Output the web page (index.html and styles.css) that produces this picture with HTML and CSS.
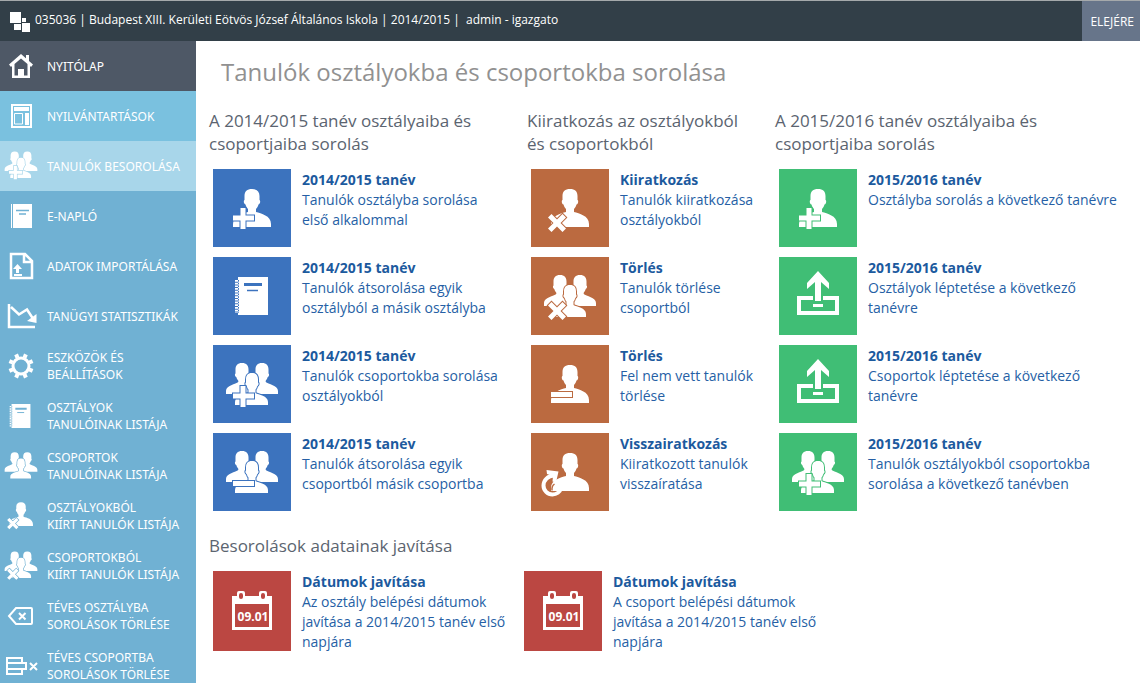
FILE: index.html
```html
<!DOCTYPE html>
<html lang="hu">
<head>
<meta charset="utf-8">
<title>Tanulók osztályokba és csoportokba sorolása</title>
<link rel="stylesheet" href="styles.css">
</head>
<body>
<svg class="defs" aria-hidden="true">
  <symbol id="bust" viewBox="0 0 78 78">
    <path d="M39 20c5 0 7.500 2.500 7.500 7v4c1.200.5.8 4-1 4.500-.5 2-1.300 3-2.500 4.500v3c5 1.500 15 3.500 15 12v3H20v-3c0-8.500 10-10.500 15-12v-3c-1.200-1.500-2-2.500-2.500-4.500-1.800-.5-2.200-4-1-4.500v-4c0-4.500 2.500-7 7.500-7z"/>
  </symbol>
  <symbol id="trio" viewBox="0 0 78 78">
    <path d="M29 18c4.500 0 6.500 2.500 6.500 6.500v4c1 .5.700 3-.8 3.500-.4 1.500-1 2.500-2 3.700V40l4 2v7H13v-3c0-6 10-6.500 12.300-9v-1.300c-1-1.200-1.600-2.200-2-3.700-1.500-.5-1.800-3-.8-3.500v-4c0-4 2-6.500 6.500-6.500zM49 18c-4.500 0-6.500 2.500-6.500 6.500v4c-1 .5-.7 3 .8 3.500.4 1.500 1 2.500 2 3.700V40l-4 2v7H65v-3c0-6-10-6.500-12.300-9v-1.300c1-1.200 1.600-2.200 2-3.700 1.500-.5 1.800-3 .8-3.500v-4c0-4-2-6.500-6.500-6.500z"/>
    <path class="edged" d="M39 28c4.500 0 6 2.500 6 6.500v3c1 .5.700 3-.8 3.500-.4 1.500-.7 2.500-1.700 3.500V48c3 2 12.500 2.500 12.500 9v3H22v-3c0-6.500 10.500-7 13.500-9v-3.500c-1-1-1.300-2-1.700-3.500-1.500-.5-1.800-3-.8-3.500v-3c0-4 1.500-6.500 6-6.500z"/>
  </symbol>
  <symbol id="plus" viewBox="0 0 78 78"><path class="edged" d="M27.500 39h5v7.500H41v5h-8.500V60h-5v-8.500H20v-5h7.500z"/></symbol>
  <symbol id="cross" viewBox="0 0 78 78"><path class="edged" d="M20.500 45l5.500 5.500 5.500-5.500 3.500 3.500-5.500 5.500 5.500 5.500-3.500 3.500-5.500-5.500-5.500 5.500-3.500-3.500 5.500-5.500-5.500-5.500z"/></symbol>
  <symbol id="student-add" viewBox="0 0 78 78"><use href="#bust"/><use href="#plus"/></symbol>
  <symbol id="student-remove" viewBox="0 0 78 78"><use href="#bust"/><use href="#cross"/></symbol>
  <symbol id="student-bar" viewBox="0 0 78 78"><use href="#bust"/><path class="edged" d="M20 47h21v5H20z"/></symbol>
  <symbol id="student-back" viewBox="0 0 78 78"><use href="#bust"/>
    <path class="line" d="M23 42.500c-6 0-10.500 5-10.500 10s4 9 9 9c4 0 7.500-2.500 8.500-6.500" stroke-width="4"/>
    <path d="M15.500 37l12 1.500-2.500 11-3.500-1 .5-5.500-6-2z"/>
    <path class="cut" d="M23.500 51q-3 2-2.500 6.500" stroke-width="1.500"/></symbol>
  <symbol id="group-add" viewBox="0 0 78 78"><use href="#trio"/><use href="#plus" y="2"/></symbol>
  <symbol id="group-remove" viewBox="0 0 78 78"><use href="#trio"/><use href="#cross"/></symbol>
  <symbol id="group-bar" viewBox="0 0 78 78"><use href="#trio"/><path class="edged" d="M20 48h21v5H20z"/></symbol>
  <symbol id="book" viewBox="0 0 78 78">
    <path d="M25 20h30v38H25z"/>
    <path class="line" d="M23.500 23v33" stroke-width="3" stroke-dasharray="1.700 1"/>
    <path class="cut" d="M25.500 23v33" stroke-width="1" stroke-dasharray="1.700 1"/>
    <path class="cut" d="M31 27.500h18" stroke-width="3"/><path class="cut" d="M34 33.500h11" stroke-width="1.500"/>
  </symbol>
  <symbol id="upload" viewBox="0 0 78 78">
    <path d="M39 14l11 12v6l-8-7v19h-6V25l-8 7v-6z"/>
    <path d="M18 39h16v4H22v11h34V43H44v-4h16v19H18zM34 47h10v3H34z"/>
  </symbol>
  <symbol id="calendar" viewBox="0 0 78 80">
    <path fill-rule="evenodd" d="M19 25h5v-3q0-2 2-2h4q2 0 2 2v3h14v-3q0-2 2-2h4q2 0 2 2v3h5v34H19zM22 33v23h34V33zM28 22q-2 0-2 2v2q0 2 2 2t2-2v-2q0-2-2-2zM50 22q-2 0-2 2v2q0 2 2 2t2-2v-2q0-2-2-2z"/>
  </symbol>
</svg>

<header class="topbar">
  <svg class="logo" viewBox="0 0 22 22"><path d="M1 1h11v11H1zM13 7h4v4h-4zM5 13h7v6H5zM13 12h8v9h-8z"/></svg>
  <p class="school">035036 | Budapest XIII. Kerületi Eötvös József Általános Iskola | 2014/2015 |&nbsp; admin - igazgato</p>
  <button class="to-top" type="button">ELEJÉRE</button>
</header>

<div class="layout">
  <nav class="sidebar">
    <a class="item home" href="#"><svg class="icon" viewBox="0 0 34 34"><path d="M17 5l12 10.500-2 2.500-1-1v12H8V17l-1 1-2-2.500zM10.500 15v11.500H14V20h6v6.500h3.500V15L17 9.500z" fill-rule="evenodd"/><path d="M22 6h3v7l-3-3z"/></svg><span>NYITÓLAP</span></a>
    <a class="item records" href="#"><svg class="icon" viewBox="0 0 34 34"><path fill-rule="evenodd" d="M7 5h21v24H7zM9 7v20h17V7z"/><path d="M10 8h15v4H10zM21 14h4v12h-4z"/><path d="M10.500 14.500h8v10.500h-8z" fill="#7ac1df" stroke="#fff"/></svg><span>NYILVÁNTARTÁSOK</span></a>
    <a class="item current" href="#" aria-current="page"><svg class="icon" viewBox="12 14 54 54"><use href="#group-add" width="78" height="78"/></svg><span>TANULÓK BESOROLÁSA</span></a>
    <a class="item" href="#"><svg class="icon" viewBox="0 0 34 34"><path d="M7 5h1v24H7zM9 5h19v24H9z"/><path class="cut" d="M12 11.500h13M15 15h7" stroke-width="1.500"/></svg><span>E-NAPLÓ</span></a>
    <a class="item" href="#"><svg class="icon" viewBox="0 0 34 34"><path class="line" d="M7 5h14l7 7v17H7zM20 5v8h8" stroke-width="2.500"/><path d="M13.500 15l4.500 5h-3v4h-3v-4H9zM10 25h8v2h-8z"/></svg><span>ADATOK IMPORTÁLÁSA</span></a>
    <a class="item" href="#"><svg class="icon" viewBox="0 0 34 34"><path class="line" d="M5 5v23h26M7 8l8 7.500 8-5 7.500 11.500" stroke-width="2.500"/><path d="M32.500 15v9l-9.500-2z"/></svg><span>TANÜGYI STATISZTIKÁK</span></a>
    <a class="item" href="#"><svg class="icon" viewBox="0 0 34 34"><circle class="line" cx="17" cy="17" r="8" stroke-width="3"/><g class="line" stroke-width="4"><path d="M25.300 20.500l3.300 1.400M20.500 25.300l1.400 3.300M13.500 25.300l-1.400 3.300M8.700 20.500l-3.300 1.400M8.700 13.500l-3.300-1.400M13.500 8.700l-1.400-3.300M20.500 8.700l1.400-3.300M25.300 13.500l3.300-1.400"/></g></svg><span>ESZKÖZÖK ÉS<br>BEÁLLÍTÁSOK</span></a>
    <a class="item" href="#"><svg class="icon" viewBox="13 12 54 54"><use href="#book" width="78" height="78"/></svg><span>OSZTÁLYOK<br>TANULÓINAK LISTÁJA</span></a>
    <a class="item" href="#"><svg class="icon" viewBox="12 13 54 54"><use href="#trio" width="78" height="78"/></svg><span>CSOPORTOK<br>TANULÓINAK LISTÁJA</span></a>
    <a class="item" href="#"><svg class="icon" viewBox="12 15 54 54"><use href="#student-remove" width="78" height="78"/></svg><span>OSZTÁLYOKBÓL<br>KIÍRT TANULÓK LISTÁJA</span></a>
    <a class="item" href="#"><svg class="icon" viewBox="12 14 54 54"><use href="#group-remove" width="78" height="78"/></svg><span>CSOPORTOKBÓL<br>KIÍRT TANULÓK LISTÁJA</span></a>
    <a class="item" href="#"><svg class="icon" viewBox="0 0 34 34"><path class="line" d="M12 9h15q1 0 1 1v14q0 1-1 1H12l-7-8zM15 14l6.500 6.500M21.500 14L15 20.500" stroke-width="2"/></svg><span>TÉVES OSZTÁLYBA<br>SOROLÁSOK TÖRLÉSE</span></a>
    <a class="item" href="#"><svg class="icon" viewBox="0 0 34 34"><path class="line" d="M3 9h15v5H3zM3 14h19v6H3zM3 20h15v5H3zM26 14l7 7M33 14l-7 7" stroke-width="2"/></svg><span>TÉVES CSOPORTBA<br>SOROLÁSOK TÖRLÉSE</span></a>
  </nav>

  <main class="content">
    <h1>Tanulók osztályokba és csoportokba sorolása</h1>
    <div class="columns">
      <section class="blue">
        <h2>A 2014/2015 tanév osztályaiba és<br>csoportjaiba sorolás</h2>
        <a class="card" href="#"><svg class="tile"><use href="#student-add"/></svg><span><b>2014/2015 tanév</b><br>Tanulók osztályba sorolása<br>első alkalommal</span></a>
        <a class="card" href="#"><svg class="tile"><use href="#book"/></svg><span><b>2014/2015 tanév</b><br>Tanulók átsorolása egyik<br>osztályból a másik osztályba</span></a>
        <a class="card" href="#"><svg class="tile"><use href="#group-add"/></svg><span><b>2014/2015 tanév</b><br>Tanulók csoportokba sorolása<br>osztályokból</span></a>
        <a class="card" href="#"><svg class="tile"><use href="#group-bar"/></svg><span><b>2014/2015 tanév</b><br>Tanulók átsorolása egyik<br>csoportból másik csoportba</span></a>
      </section>
      <section class="orange">
        <h2>Kiiratkozás az osztályokból<br>és csoportokból</h2>
        <a class="card" href="#"><svg class="tile"><use href="#student-remove"/></svg><span><b>Kiiratkozás</b><br>Tanulók kiiratkozása<br>osztályokból</span></a>
        <a class="card" href="#"><svg class="tile"><use href="#group-remove"/></svg><span><b>Törlés</b><br>Tanulók törlése<br>csoportból</span></a>
        <a class="card" href="#"><svg class="tile"><use href="#student-bar"/></svg><span><b>Törlés</b><br>Fel nem vett tanulók<br>törlése</span></a>
        <a class="card" href="#"><svg class="tile"><use href="#student-back"/></svg><span><b>Visszairatkozás</b><br>Kiiratkozott tanulók<br>visszaíratása</span></a>
      </section>
      <section class="green">
        <h2>A 2015/2016 tanév osztályaiba és<br>csoportjaiba sorolás</h2>
        <a class="card" href="#"><svg class="tile"><use href="#student-add"/></svg><span><b>2015/2016 tanév</b><br>Osztályba sorolás a következő tanévre</span></a>
        <a class="card" href="#"><svg class="tile"><use href="#upload"/></svg><span><b>2015/2016 tanév</b><br>Osztályok léptetése a következő<br>tanévre</span></a>
        <a class="card" href="#"><svg class="tile"><use href="#upload"/></svg><span><b>2015/2016 tanév</b><br>Csoportok léptetése a következő<br>tanévre</span></a>
        <a class="card" href="#"><svg class="tile"><use href="#group-add"/></svg><span><b>2015/2016 tanév</b><br>Tanulók osztályokból csoportokba<br>sorolása a következő tanévben</span></a>
      </section>
    </div>
    <section class="fixes red">
      <h2>Besorolások adatainak javítása</h2>
      <div class="fix-list">
        <a class="card" href="#"><svg class="tile tall"><use href="#calendar"/><text class="date" x="40" y="50">09.01</text></svg><span><b>Dátumok javítása</b><br>Az osztály belépési dátumok<br>javítása a 2014/2015 tanév első<br>napjára</span></a>
        <a class="card" href="#"><svg class="tile tall"><use href="#calendar"/><text class="date" x="40" y="50">09.01</text></svg><span><b>Dátumok javítása</b><br>A csoport belépési dátumok<br>javítása a 2014/2015 tanév első<br>napjára</span></a>
      </div>
    </section>
  </main>
</div>
</body>
</html>
```
FILE: styles.css
```css
* { box-sizing: border-box; }
body {
  margin: 0;
  height: 100vh;
  display: flex;
  flex-direction: column;
  overflow: hidden;
  background: #fff;
  font-family: "Open Sans", "Noto Sans", sans-serif;
  font-size: 14px;
}
a { color: inherit; text-decoration: none; }
svg { flex: none; fill: #fff; }
.defs { position: absolute; width: 0; height: 0; }
.edged { stroke: var(--back); stroke-width: 2; paint-order: stroke; }
.line { fill: none; stroke: #fff; }
.cut { fill: none; stroke: var(--back); }
.date { font: bold 12px "Open Sans", sans-serif; text-anchor: middle; }

.topbar {
  display: flex;
  flex: none;
  height: 41px;
  border-top: 1px solid #a5a9ab;
  background: #323f48;
  color: #fff;
  font-size: 12px;
}
.logo { width: 22px; height: 22px; margin: 10px 4px 0 9px; }
.school { flex: 1; margin: 0; line-height: 38px; white-space: nowrap; }
.to-top {
  border: 0;
  padding: 0 6px 0 8px;
  background: #67758a;
  color: #fff;
  font: inherit;
}

.layout { display: flex; flex: 1; min-height: 0; }
.sidebar {
  --back: #70b1d3;
  flex: none;
  width: 196px;
  overflow: hidden;
  background: var(--back);
  color: #fff;
  font-family: "Noto Sans", "Open Sans", sans-serif;
  font-size: 12px;
  line-height: 17px;
}
.item {
  display: flex;
  align-items: center;
  gap: 9px;
  height: 50px;
  padding-left: 4px;
  background: var(--back);
  white-space: nowrap;
}
.home { --back: #4e5866; }
.records { --back: #7ac1df; }
.current { --back: #a8d6ea; }
.icon { width: 34px; height: 34px; }

.content { flex: 1; min-width: 0; padding: 14px 0 0 13px; overflow: hidden; }
h1 {
  margin: 0 0 20px 12px;
  color: #919191;
  font-size: 24px;
  font-weight: 400;
  line-height: 34px;
}
h2 {
  margin: 0 0 14px;
  color: #5b6470;
  font-size: 17px;
  font-weight: 400;
  line-height: 23px;
  white-space: nowrap;
}
.columns { display: grid; grid-template-columns: 318fr 248fr 365fr; }
.card {
  display: flex;
  gap: 11px;
  margin: 0 0 10px 4px;
  color: #265fa5;
  line-height: 20px;
  white-space: nowrap;
}
.card span { padding-top: 1px; }
.card b { color: #1c5a9e; }
.tile { width: 78px; height: 78px; background: var(--back); }
.tall { height: 80px; }
.blue { --back: #3c73be; }
.orange { --back: #bb6a40; }
.green { --back: #40be75; }
.red { --back: #bb4742; }
.fixes { margin-top: 13px; }
.fix-list { display: grid; grid-template-columns: 311fr 620fr; }
```
